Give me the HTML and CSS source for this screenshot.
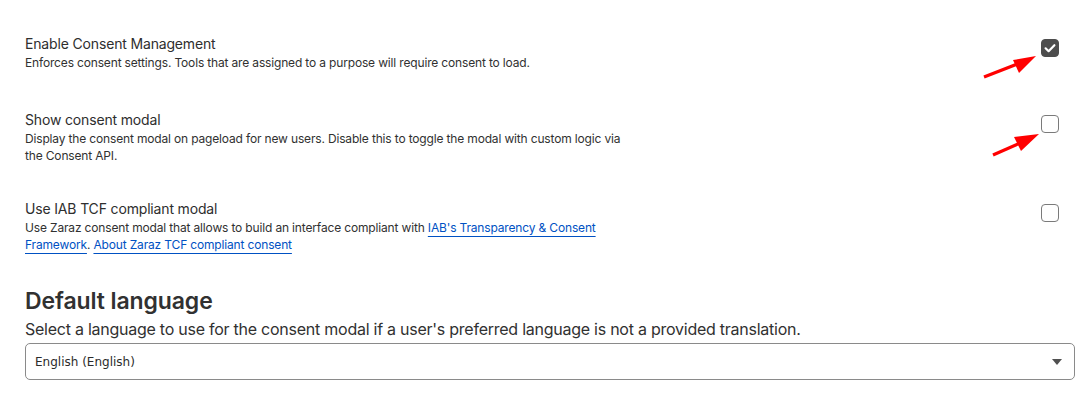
FILE: index.html
```html
<!DOCTYPE html>
<html>
<head>
<meta charset="utf-8">
<link rel="stylesheet" href="styles.css">
</head>
<body>
<main class="page">
  <section class="settings">
    <div class="row">
      <div class="text">
        <div class="title">Enable Consent Management</div>
        <div class="desc">Enforces consent settings. Tools that are assigned to a purpose will require consent to load.</div>
      </div>
      <span class="check checked">
        <svg viewBox="0 0 18 18" width="18" height="18"><path d="M4.6 9.3 L7.6 12.2 L13.4 6.2" fill="none" stroke="#fff" stroke-width="2.2" stroke-linecap="round" stroke-linejoin="round"/></svg>
      </span>
    </div>
    <div class="row">
      <div class="text">
        <div class="title">Show consent modal</div>
        <div class="desc">Display the consent modal on pageload for new users. Disable this to toggle the modal with custom logic via the Consent API.</div>
      </div>
      <span class="check"></span>
    </div>
    <div class="row">
      <div class="text">
        <div class="title">Use IAB TCF compliant modal</div>
        <div class="desc">Use Zaraz consent modal that allows to build an interface compliant with <a href="#">IAB's Transparency &amp; Consent Framework</a>. <a href="#">About Zaraz TCF compliant consent</a></div>
      </div>
      <span class="check"></span>
    </div>
  </section>
  <section class="language">
    <h2 class="heading">Default language</h2>
    <p class="sub">Select a language to use for the consent modal if a user's preferred language is not a provided translation.</p>
    <div class="select">
      <span class="select-value">English (English)</span>
      <span class="caret"></span>
    </div>
  </section>
  <svg class="arrows" width="1088" height="411" viewBox="0 0 1088 411">
    <line x1="984" y1="77" x2="1020" y2="63" stroke="#ff0000" stroke-width="3.2"/>
    <polygon points="1036,56 1013,60 1019,73" fill="#ff0000"/>
    <line x1="993" y1="155" x2="1020" y2="143" stroke="#ff0000" stroke-width="3.2"/>
    <polygon points="1039,134 1014,137 1021,151" fill="#ff0000"/>
  </svg>
</main>
</body>
</html>
```
FILE: styles.css
```css
* { box-sizing: border-box; }
html, body { margin: 0; padding: 0; background: #fff; }
body {
  font-family: Inter, "Noto Sans", sans-serif;
  color: #313131;
  width: 1088px;
  height: 411px;
  overflow: hidden;
}
.page {
  position: relative;
  padding: 34px 13px 0 25px;
}
.settings {
  display: flex;
  flex-direction: column;
  gap: 35px;
}
.row {
  display: flex;
  justify-content: space-between;
  align-items: flex-start;
  min-height: 41px;
  padding-right: 16px;
}
.text { max-width: 605px; }
.title {
  font-size: 14px;
  line-height: 20px;
  letter-spacing: -0.16px;
  color: #2e2e2e;
}
.desc {
  font-size: 12px;
  line-height: 17px;
  letter-spacing: -0.16px;
  color: #313131;
}
.desc a {
  color: #0051c3;
  text-decoration: underline;
  text-decoration-thickness: 1px;
  text-underline-offset: 4px;
}
.check {
  width: 18px;
  height: 18px;
  margin-top: 5px;
  border: 1.5px solid #7a7a7a;
  border-radius: 4px;
  display: flex;
  align-items: center;
  justify-content: center;
  background: #fff;
}
.check.checked {
  background: #4d4d4d;
  border-color: #4d4d4d;
}
.check svg { display: block; flex: none; }
.language { margin-top: 33px; }
.heading {
  margin: 0;
  font-size: 23px;
  line-height: 30px;
  font-weight: 600;
  letter-spacing: -0.1px;
  color: #313131;
}
.sub {
  margin: 3px 0 4px;
  font-size: 16px;
  line-height: 20px;
  letter-spacing: -0.25px;
  color: #313131;
}
.select {
  height: 37px;
  border: 1px solid #8a8a8a;
  border-radius: 5px;
  display: flex;
  align-items: center;
  justify-content: space-between;
  padding: 0 12px 0 9px;
}
.select-value {
  font-family: "DejaVu Sans", sans-serif;
  font-size: 12px;
  color: #2b2b2b;
}
.caret {
  width: 0;
  height: 0;
  border-left: 5px solid transparent;
  border-right: 5px solid transparent;
  border-top: 6px solid #505050;
}
.arrows {
  position: absolute;
  left: 0;
  top: 0;
  pointer-events: none;
}
```
